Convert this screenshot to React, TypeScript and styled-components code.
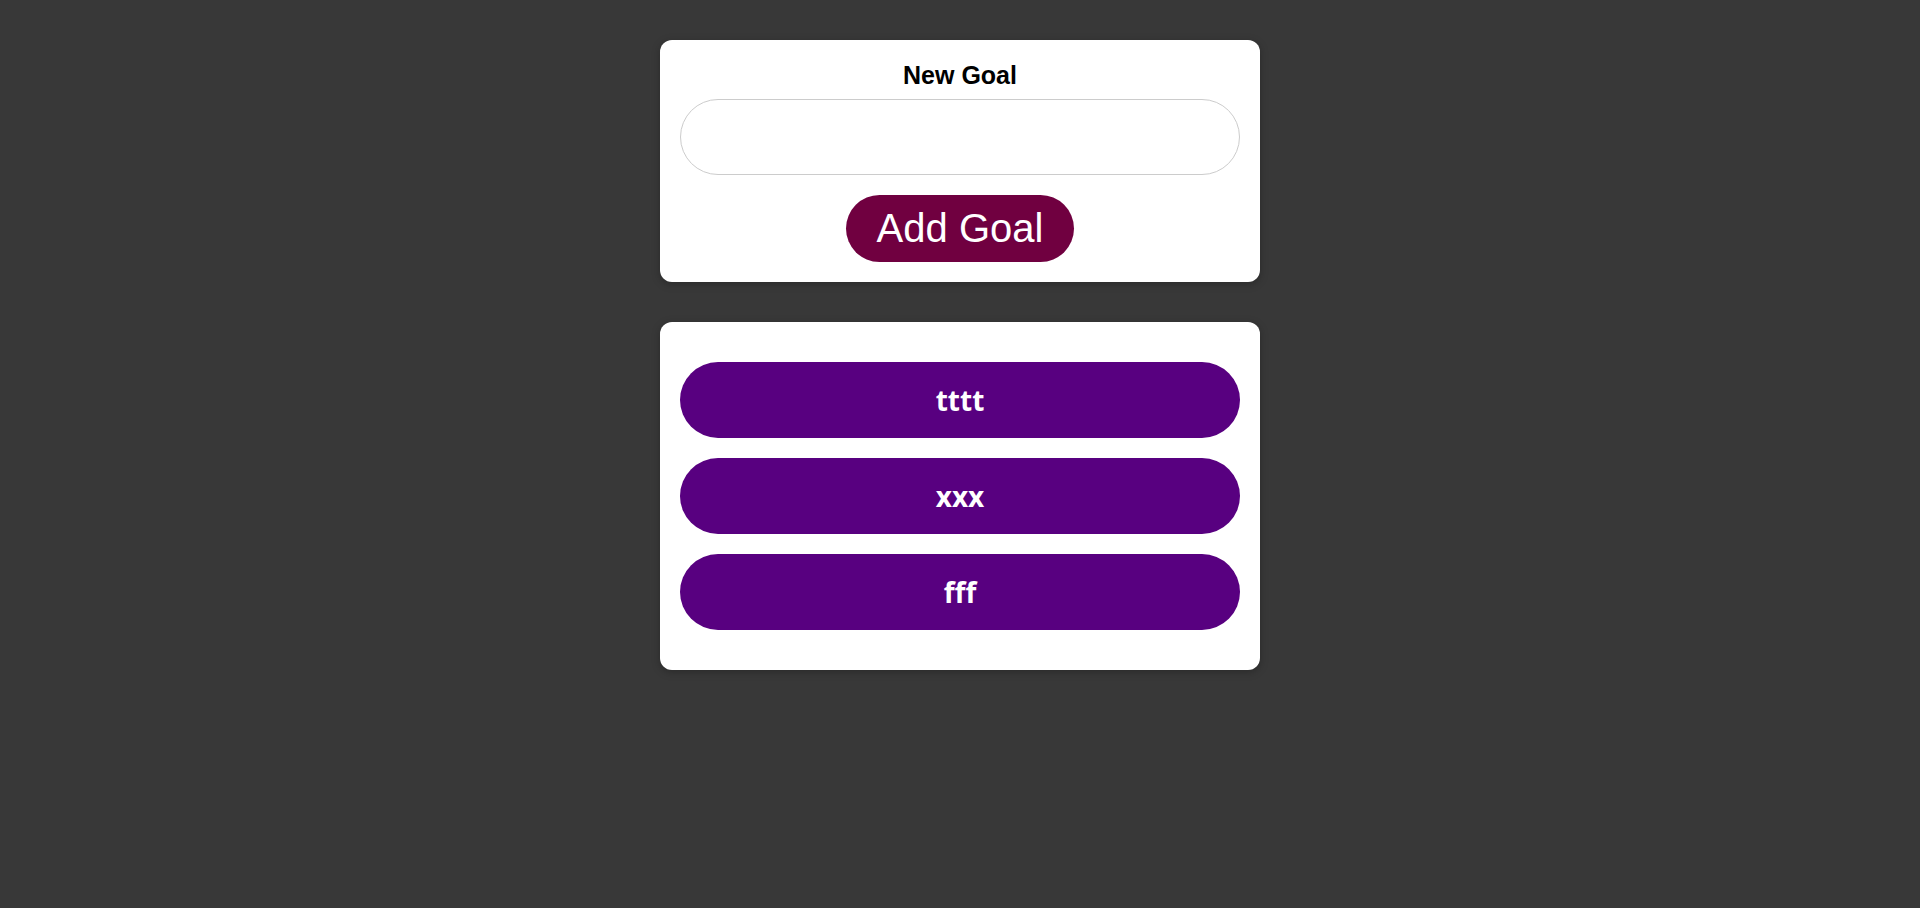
import styled, { createGlobalStyle } from "styled-components";

const GlobalStyle = createGlobalStyle`
  * {
    box-sizing: border-box;
  }
  body {
    margin: 0;
    background-color: #383838;
    font-family: "Liberation Sans", Arial, sans-serif;
  }
`;

const Page = styled.main`
  display: flex;
  flex-direction: column;
  align-items: center;
  gap: 40px;
  padding-top: 40px;
  min-height: 100vh;
`;

interface CardProps {
  padY: number;
}

const Card = styled.section<CardProps>`
  width: 600px;
  background-color: #ffffff;
  border-radius: 12px;
  box-shadow: 0 2px 8px rgba(0, 0, 0, 0.26);
  padding: ${(props) => props.padY}px 20px;
`;

const Form = styled.form`
  display: flex;
  flex-direction: column;
  align-items: center;
`;

const Label = styled.label`
  font-size: 25px;
  font-weight: bold;
  color: #000;
  line-height: 30px;
  margin-bottom: 9px;
`;

const Input = styled.input`
  width: 100%;
  height: 76px;
  border: 1px solid #cccccc;
  border-radius: 38px;
  padding: 0 30px;
  font: inherit;
  font-size: 24px;
  outline: none;
`;

const Button = styled.button`
  margin-top: 20px;
  height: 67px;
  padding: 0 31px;
  border: none;
  border-radius: 34px;
  background-color: #700040;
  color: #ffffff;
  font-family: "Liberation Sans", Arial, sans-serif;
  font-size: 40px;
  cursor: pointer;
`;

const GoalList = styled.ul`
  list-style: none;
  margin: 0;
  padding: 0;
  display: flex;
  flex-direction: column;
  gap: 20px;
`;

const GoalItem = styled.li`
  height: 76px;
  border-radius: 38px;
  background-color: #580080;
  color: #ffffff;
  display: flex;
  align-items: center;
  justify-content: center;
  font-family: "Open Sans", "Noto Sans", sans-serif;
  font-weight: bold;
  font-size: 28px;
`;

const goals = ["tttt", "xxx", "fff"];

function App() {
  return (
    <>
      <GlobalStyle />
      <Page>
        <Card padY={20}>
          <Form onSubmit={(e) => e.preventDefault()}>
            <Label htmlFor="goal">New Goal</Label>
            <Input id="goal" type="text" />
            <Button type="submit">Add Goal</Button>
          </Form>
        </Card>
        <Card padY={40}>
          <GoalList>
            {goals.map((g) => (
              <GoalItem key={g}>{g}</GoalItem>
            ))}
          </GoalList>
        </Card>
      </Page>
    </>
  );
}

export default App;
